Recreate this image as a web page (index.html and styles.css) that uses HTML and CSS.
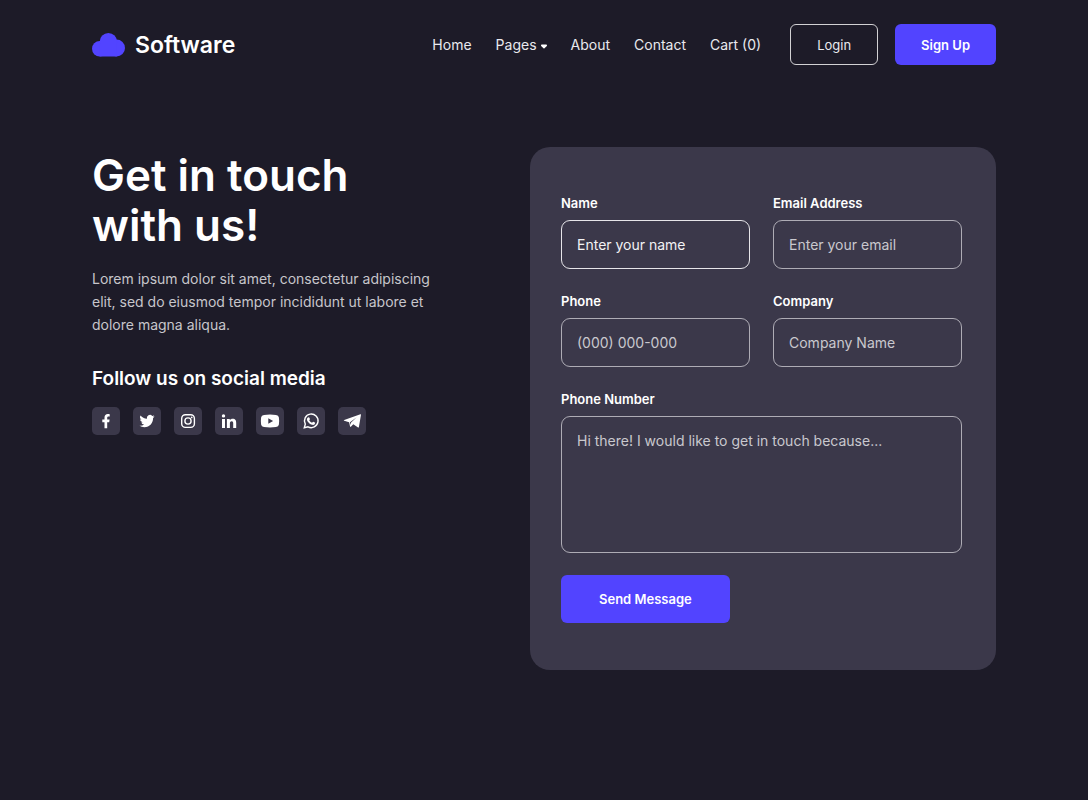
FILE: index.html
```html
<!DOCTYPE html>
<html lang="en">
<head>
<meta charset="utf-8">
<meta name="viewport" content="width=device-width, initial-scale=1">
<title>Software – Contact</title>
<link rel="stylesheet" href="styles.css">
</head>
<body>
<header class="header container">
  <a class="brand" href="#">
    <svg class="brand-mark" viewBox="0 0 33 24" aria-hidden="true"><circle cx="7.700" cy="15.800" r="7.700"/><circle cx="24.500" cy="15" r="8.500"/><circle cx="16.400" cy="8.700" r="8.700"/><path d="M7.700 11h17v12.500h-17Z"/></svg>
    <span class="brand-name">Software</span>
  </a>
  <nav class="nav" aria-label="Main">
    <a href="#">Home</a>
    <a class="nav-drop" href="#">Pages<svg class="caret" viewBox="0 0 6 5" aria-hidden="true"><path d="M.8.500h4.400q.8.100.8.900q0 .4-.4.800L3.500 4.300q-.5.500-1 0L.4 2.200Q0 1.800 0 1.400q0-.8.800-.9Z"/></svg></a>
    <a href="#">About</a>
    <a href="#">Contact</a>
    <a href="#">Cart (0)</a>
  </nav>
  <div class="actions">
    <button class="btn btn-outline" type="button">Login</button>
    <button class="btn btn-primary" type="button">Sign Up</button>
  </div>
</header>

<main class="main container">
  <section class="intro">
    <h1 class="title">Get in touch<br>with us!</h1>
    <p class="lead">Lorem ipsum dolor sit amet, consectetur adipiscing elit, sed do eiusmod tempor incididunt ut labore et dolore magna aliqua.</p>
    <h2 class="subtitle">Follow us on social media</h2>
    <ul class="social">
      <li><a href="#" aria-label="Facebook"><svg viewBox="0 0 28 28"><path d="M12.500 21.300v-6.100h-2.200v-2.600h2.200v-2c0-2.300 1.300-3.500 3.300-3.500.9 0 1.900.2 1.900.2v2.200h-1.100c-1.100 0-1.400.7-1.400 1.300v1.800h2.400l-.4 2.600h-2v6.100Z"/></svg></a></li>
      <li><a href="#" aria-label="Twitter"><svg viewBox="0 0 28 28"><g transform="translate(6.500 6.500) scale(.63)"><path d="M23.950 4.570a10 10 0 0 1-2.820.77 4.960 4.960 0 0 0 2.160-2.720c-.95.550-2 .950-3.130 1.180a4.920 4.920 0 0 0-8.380 4.480C7.690 8.090 4.070 6.130 1.640 3.160a4.920 4.920 0 0 0 1.520 6.570 4.900 4.900 0 0 1-2.230-.61v.06a4.920 4.920 0 0 0 3.950 4.830 5 5 0 0 1-2.210.08 4.940 4.940 0 0 0 4.600 3.420A9.870 9.870 0 0 1 0 19.540a14 14 0 0 0 7.550 2.210c9.050 0 14-7.500 14-13.980 0-.21 0-.42-.02-.63a9.940 9.940 0 0 0 2.460-2.550Z"/></g></svg></a></li>
      <li><a href="#" aria-label="Instagram"><svg viewBox="0 0 28 28"><g class="line"><rect x="7.700" y="7.700" width="12.700" height="12.700" rx="3.700"/><circle cx="14" cy="14" r="3.100"/></g><circle cx="17.700" cy="10.400" r=".9"/></svg></a></li>
      <li><a href="#" aria-label="LinkedIn"><svg viewBox="0 0 28 28"><circle cx="8.500" cy="8.900" r="1.700"/><path d="M7 12h3v9H7Zm4.900 0h2.900v1.300c.6-1 1.600-1.500 2.800-1.500 2.900 0 3.600 1.800 3.600 4.300V21h-3v-4.400c0-1.100-.1-2.400-1.500-2.400-1.500 0-1.800 1.100-1.800 2.400V21h-3Z"/></svg></a></li>
      <li><a href="#" aria-label="YouTube"><svg viewBox="0 0 28 28"><path fill-rule="evenodd" d="M8 7.900q6-.7 12 0 2.600.2 2.900 2.500.5 3.600 0 7.200-.3 2.300-2.900 2.500-6 .7-12 0-2.600-.2-2.900-2.500-.5-3.600 0-7.200Q5.400 8.100 8 7.900Zm4.300 3.400v5.400l4.800-2.700Z"/></svg></a></li>
      <li><a href="#" aria-label="WhatsApp"><svg viewBox="0 0 28 28"><path class="line" d="M7.300 20.800l1-3.700a6.800 6.800 0 1 1 2.700 2.700Z"/><path d="M11.800 10.200q.4 0 .6.500l.5 1.300q.1.300-.1.600l-.6.700q.9 1.800 2.800 2.500l.8-.9q.3-.3.600-.2l1.500.7q.3.200.3.400 0 1.900-2 2.200c-2.600 0-6-3-6.300-5.500 0-1.200.7-2.300 1.900-2.300Z"/></svg></a></li>
      <li><a href="#" aria-label="Telegram"><svg viewBox="0 0 28 28"><path d="M22.400 7.200q.7-.2.600.6l-2.100 12.100q-.2 1-1.200.4l-4.400-3-2.200 2.300q-.8.700-1.100-.3l-.9-4-4.900-1.500q-1-.4 0-.9ZM18.700 10.300l-6.700 4.900.6 2.800.5-2.400Z" fill-rule="evenodd"/></svg></a></li>
    </ul>
  </section>

  <form class="card">
    <div class="field">
      <label for="name">Name</label>
      <input class="active" id="name" type="text" placeholder="Enter your name">
    </div>
    <div class="field">
      <label for="email">Email Address</label>
      <input id="email" type="email" placeholder="Enter your email">
    </div>
    <div class="field">
      <label for="phone">Phone</label>
      <input id="phone" type="tel" placeholder="(000) 000-000">
    </div>
    <div class="field">
      <label for="company">Company</label>
      <input id="company" type="text" placeholder="Company Name">
    </div>
    <div class="field field-wide">
      <label for="message">Phone Number</label>
      <textarea id="message" placeholder="Hi there! I would like to get in touch because..."></textarea>
    </div>
    <button class="btn btn-primary btn-send" type="submit">Send Message</button>
  </form>
</main>
</body>
</html>
```
FILE: styles.css
```css
* { box-sizing: border-box; }

body {
  margin: 0;
  background: #1d1b28;
  color: #fff;
  font: 400 14px/20px Inter, "Liberation Sans", sans-serif;
}

a { color: inherit; text-decoration: none; }

.container {
  max-width: 968px;
  margin: 0 auto;
  padding: 0 32px;
}

.header {
  display: flex;
  align-items: center;
  padding-top: 24px;
}

.brand { display: flex; align-items: center; gap: 10px; margin-right: auto; }
.brand-mark { width: 33px; height: 24px; fill: #5244ff; }
.brand-name { font-size: 23px; line-height: 32px; font-weight: 600; }

.nav { display: flex; gap: 24px; color: #e9e9ee; }
.nav-drop { display: flex; align-items: center; gap: 4px; }
.caret { width: 6px; height: 5px; margin-top: 4px; fill: #fff; }

.actions { display: flex; gap: 17px; margin-left: 29px; }

.btn {
  border: 1px solid transparent;
  border-radius: 6px;
  padding: 0 25px;
  height: 41px;
  font: inherit;
  font-size: 13px;
  color: #fff;
  cursor: pointer;
}
.btn-outline { background: transparent; border-color: #d2d1d4; color: #e9e9ee; padding: 0 26px; }
.btn-primary { background: #5244ff; font-weight: 600; }

.main {
  display: grid;
  grid-template-columns: 1fr 466px;
  gap: 64px;
  align-items: start;
  margin-top: 82px;
  margin-bottom: 82px;
}

.intro { padding-top: 3px; }
.title { margin: 0; font-size: 44px; line-height: 50px; font-weight: 600; }
.lead { max-width: 344px; margin: 17px 0 29px; line-height: 23px; color: #c7c6cb; }
.subtitle { margin: 0 0 14px; font-size: 19px; line-height: 28px; font-weight: 600; }

.social { display: flex; flex-wrap: wrap; gap: 13px; margin: 0; padding: 0; list-style: none; }
.social a { display: block; border-radius: 5px; background: #3b384a; }
.social svg { display: block; width: 28px; height: 28px; fill: #fff; }
.social .line { fill: none; stroke: #fff; stroke-width: 1.4; }

.card {
  display: grid;
  grid-template-columns: 1fr 1fr;
  gap: 22px 23px;
  padding: 46px 34px 47px 31px;
  border-radius: 20px;
  background: #3b384a;
}
.field { display: flex; flex-direction: column; gap: 7px; min-width: 0; }
.field-wide { grid-column: 1 / -1; }
.field label { font-size: 13px; font-weight: 600; }

.field input,
.field textarea {
  width: 100%;
  height: 49px;
  padding: 0 15px;
  border: 1px solid #aeacb5;
  border-radius: 9px;
  background: transparent;
  color: #fff;
  font: inherit;
  outline: 0;
}
.field textarea { display: block; height: 137px; padding-top: 14px; resize: none; }
.field ::placeholder { color: #c9c8ce; opacity: 1; }
.field .active { border-color: #e6e5e9; }
.field .active::placeholder { color: #f2f2f4; }

.btn-send { grid-column: 1 / -1; justify-self: start; height: 48px; padding: 0 37px; }

@media (max-width: 900px) {
  .header { flex-wrap: wrap; gap: 20px; }
  .main { grid-template-columns: 1fr; }
}
```
